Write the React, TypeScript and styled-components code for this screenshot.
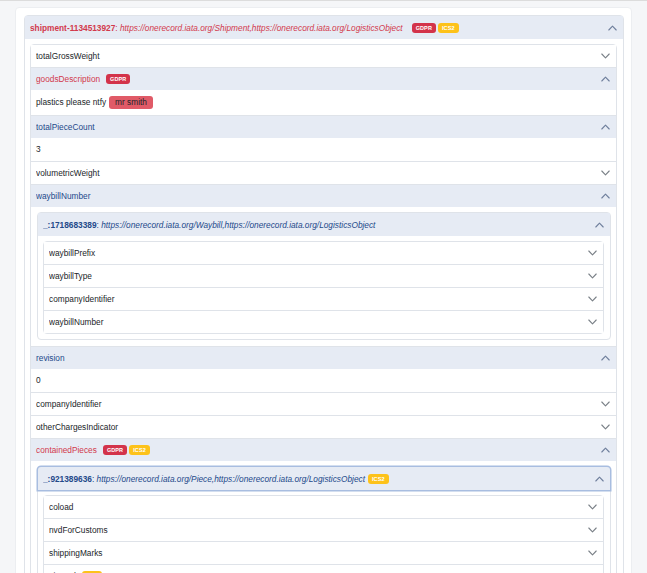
import React from 'react';
import styled, { createGlobalStyle, css } from 'styled-components';

const Global = createGlobalStyle`
  html, body { margin: 0; padding: 0; }
  body {
    background: #f5f6f8;
    border-top: 1px solid #dcdcdc;
    font-family: "Liberation Sans", Arial, sans-serif;
    font-size: 8.3px;
    color: #212529;
  }
`;

type Tone = 'red' | 'blue' | 'plain';
const toneColor: Record<Tone, string> = { red: '#d2394c', blue: '#23498a', plain: '#212529' };

const Card = styled.div`
  margin: 6px 15px 0;
  background: #fff;
  border: 1px solid #eceef1;
  border-radius: 4px;
  padding: 7px 7px 12px 8px;
`;

const Stack = styled.div`
  display: flex;
  flex-direction: column;
`;

const Item = styled.div`
  border: 1px solid #dfe3e9;
  background: #fff;
  & + & { margin-top: -1px; }
  &:first-child { border-top-left-radius: 4px; border-top-right-radius: 4px; }
  &:last-child { border-bottom-left-radius: 4px; border-bottom-right-radius: 4px; }
`;

const Header = styled.div<{ $open: boolean; $tone: Tone; $h: number; $focus?: boolean; $pr: number }>`
  height: ${(p) => p.$h}px;
  display: flex;
  align-items: center;
  padding: 0 ${(p) => p.$pr}px 0 5px;
  color: ${(p) => (p.$open ? toneColor[p.$tone] : '#212529')};
  background: ${(p) => (p.$open ? '#e6ebf4' : '#fff')};
  white-space: nowrap;
  ${(p) =>
    p.$focus &&
    css`
      position: relative;
      box-shadow: 0 0 0 1.5px #a8bde0;
      border-radius: 3px 3px 0 0;
    `}
`;

const Title = styled.div`
  flex: 1;
  display: flex;
  align-items: center;
  min-width: 0;
  overflow: hidden;
`;

const Id = styled.span`
  font-weight: 700;
`;

const Types = styled.span`
  font-style: italic;
`;

const Badges = styled.span<{ $ml: number }>`
  display: inline-flex;
  gap: 2px;
  margin-left: ${(p) => p.$ml}px;
`;

const Badge = styled.span<{ $kind: 'gdpr' | 'ics2' }>`
  display: inline-flex;
  align-items: center;
  height: 10px;
  padding: 0 4px;
  border-radius: 3px;
  font-size: 5.5px;
  font-weight: 700;
  letter-spacing: 0.1px;
  color: #fff;
  background: ${(p) => (p.$kind === 'gdpr' ? '#d3334a' : '#fdc21a')};
`;

const Body = styled.div<{ $pad: string }>`
  padding: ${(p) => p.$pad};
`;

const Value = styled.div`
  display: flex;
  align-items: center;
  gap: 3px;
  min-height: 11px;
  padding: 6px 5px;
  line-height: 11px;
`;

const Highlight = styled.span`
  display: inline-flex;
  align-items: center;
  height: 13px;
  padding: 0 6px;
  border-radius: 3px;
  background: #e05a67;
  color: #212529;
`;

const Chevron = ({ up }: { up: boolean }) => (
  <svg width="9" height="6" viewBox="0 0 9 6" fill="none">
    <polyline
      points={up ? '0.8,5 4.5,1.2 8.2,5' : '0.8,1 4.5,4.8 8.2,1'}
      stroke={up ? '#6f7f9c' : '#7a8087'}
      strokeWidth="1.1"
      strokeLinecap="round"
      strokeLinejoin="round"
    />
  </svg>
);

type Node = {
  key: string;
  label: React.ReactNode;
  tone?: Tone;
  open?: boolean;
  value?: React.ReactNode;
  objects?: ObjNode[];
  badges?: ('gdpr' | 'ics2')[];
};

type ObjNode = {
  id: string;
  types: string;
  tone: Tone;
  badges?: ('gdpr' | 'ics2')[];
  focus?: boolean;
  props: Node[];
};

const BadgeList = ({ list, ml }: { list?: ('gdpr' | 'ics2')[]; ml: number }) =>
  list && list.length ? (
    <Badges $ml={ml}>
      {list.map((b) => (
        <Badge key={b} $kind={b}>
          {b === 'gdpr' ? 'GDPR' : 'ICS2'}
        </Badge>
      ))}
    </Badges>
  ) : null;

const ObjectAccordion = ({ obj, top }: { obj: ObjNode; top?: boolean }) => (
  <Stack>
    <Item>
      <Header $open $tone={obj.tone} $h={23} $focus={obj.focus} $pr={6}>
        <Title>
          <Id>{obj.id}</Id>
          <span>:&nbsp;</span>
          <Types>{obj.types}</Types>
          <BadgeList list={obj.badges} ml={top ? 9 : 3} />
        </Title>
        <Chevron up />
      </Header>
      <Body $pad="5px 6px 5px 5px">
        <Stack>
          {obj.props.map((n) => (
            <PropItem key={n.key} node={n} />
          ))}
        </Stack>
      </Body>
    </Item>
  </Stack>
);

const PropItem = ({ node }: { node: Node }) => (
  <Item>
    <Header $open={!!node.open} $tone={node.tone || 'blue'} $h={22} $pr={6}>
      <Title>
        <span>{node.label}</span>
        <BadgeList list={node.badges} ml={6} />
      </Title>
      <Chevron up={!!node.open} />
    </Header>
    {node.open && node.value !== undefined && <Value>{node.value}</Value>}
    {node.open && node.objects && (
      <Body $pad="5px 5px 6px 6px">
        {node.objects.map((o) => (
          <ObjectAccordion key={o.id} obj={o} />
        ))}
      </Body>
    )}
  </Item>
);

const closed = (k: string, badges?: ('gdpr' | 'ics2')[]): Node => ({ key: k, label: k, badges });

const data: ObjNode = {
  id: 'shipment-1134513927',
  types: 'https://onerecord.iata.org/Shipment,https://onerecord.iata.org/LogisticsObject',
  tone: 'red',
  badges: ['gdpr', 'ics2'],
  props: [
    closed('totalGrossWeight'),
    {
      key: 'goodsDescription',
      label: 'goodsDescription',
      tone: 'red',
      open: true,
      badges: ['gdpr'],
      value: (
        <>
          plastics please ntfy <Highlight>mr smith</Highlight>
        </>
      ),
    },
    { key: 'totalPieceCount', label: 'totalPieceCount', tone: 'blue', open: true, value: '3' },
    closed('volumetricWeight'),
    {
      key: 'waybillNumber',
      label: 'waybillNumber',
      tone: 'blue',
      open: true,
      objects: [
        {
          id: '_:1718683389',
          types: 'https://onerecord.iata.org/Waybill,https://onerecord.iata.org/LogisticsObject',
          tone: 'blue',
          props: [
            closed('waybillPrefix'),
            closed('waybillType'),
            closed('companyIdentifier'),
            closed('waybillNumber'),
          ],
        },
      ],
    },
    { key: 'revision', label: 'revision', tone: 'blue', open: true, value: '0' },
    closed('companyIdentifier'),
    closed('otherChargesIndicator'),
    {
      key: 'containedPieces',
      label: 'containedPieces',
      tone: 'red',
      open: true,
      badges: ['gdpr', 'ics2'],
      objects: [
        {
          id: '_:921389636',
          types: 'https://onerecord.iata.org/Piece,https://onerecord.iata.org/LogisticsObject',
          tone: 'blue',
          badges: ['ics2'],
          focus: true,
          props: [
            closed('coload'),
            closed('nvdForCustoms'),
            closed('shippingMarks'),
            closed('pieceId', ['ics2']),
            closed('grossWeight'),
            closed('dimensions'),
          ],
        },
      ],
    },
  ],
};

export default function App() {
  return (
    <>
      <Global />
      <Card>
        <ObjectAccordion obj={data} top />
      </Card>
    </>
  );
}
